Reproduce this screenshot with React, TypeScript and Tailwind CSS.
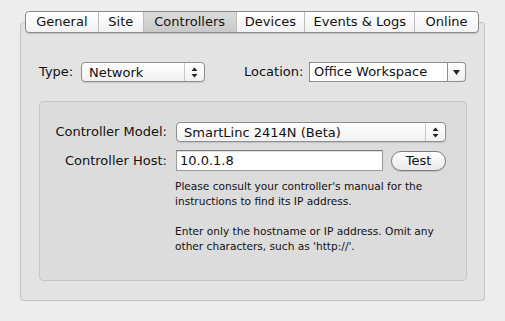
import React from 'react';

const font = { fontFamily: '"DejaVu Sans", "Liberation Sans", sans-serif' };

const tabs = [
  { label: 'General', w: 72 },
  { label: 'Site', w: 45 },
  { label: 'Controllers', w: 93 },
  { label: 'Devices', w: 69 },
  { label: 'Events & Logs', w: 110 },
  { label: 'Online', w: 64 },
];

const UpDown = () => (
  <svg width="7" height="11" viewBox="0 0 7 11">
    <path d="M3.5 0.5 L6.5 4 L0.5 4 Z" fill="#222" />
    <path d="M3.5 10.5 L6.5 7 L0.5 7 Z" fill="#222" />
  </svg>
);

const Popup = ({ value, width }: { value: string; width: string }) => (
  <div
    className={`flex h-[20px] ${width} items-center rounded-[4px] border border-[#8f8f8f] bg-gradient-to-b from-white to-[#f1f1f1] shadow-[0_1px_1px_rgba(0,0,0,0.12)]`}
  >
    <span className="flex-1 pl-[7px] text-[13px] text-[#111] leading-none">{value}</span>
    <span className="flex h-full w-[20px] items-center justify-center border-l border-[#c8c8c8]">
      <UpDown />
    </span>
  </div>
);

const App: React.FC = () => {
  return (
    <div className="h-[321px] w-[505px] overflow-hidden bg-[#ededed] px-[20px] pt-[11px]" style={font}>
      {/* Tab bar */}
      <div className="relative z-10 ml-[5px] flex h-[22px] w-[454px] overflow-hidden rounded-[4px] border border-[#8a8a8a] bg-gradient-to-b from-white to-[#f2f2f2] shadow-[0_1px_1px_rgba(0,0,0,0.15)]">
        {tabs.map((t, i) => (
          <div
            key={t.label}
            className={`flex items-center justify-center text-[13px] text-[#111] ${
              i > 0 ? 'border-l border-[#bcbcbc]' : ''
            } ${t.label === 'Controllers' ? 'bg-gradient-to-b from-[#dcdcdc] to-[#c9c9c9]' : ''}`}
            style={{ width: t.w }}
          >
            {t.label}
          </div>
        ))}
      </div>

      {/* Tab body */}
      <div className="-mt-[11px] h-[279px] w-[465px] rounded-[3px] border border-[#c4c4c4] bg-[#e3e3e3] px-[18px] pt-[39px]">
        <div className="flex h-[20px] items-center">
          <span className="w-[42px] text-[13px] text-[#111]">Type:</span>
          <Popup value="Network" width="w-[124px]" />
          <span className="ml-[39px] w-[65px] text-[13px] text-[#111]">Location:</span>
          <div className="flex h-[20px] w-[157px] items-stretch">
            <div className="flex flex-1 items-center border border-[#8f8f8f] bg-white pl-[4px] text-[13px] text-[#111]">
              Office Workspace
            </div>
            <div className="flex w-[18px] items-center justify-center rounded-r-[4px] border border-l-0 border-[#8f8f8f] bg-gradient-to-b from-white to-[#efefef]">
              <svg width="7" height="5" viewBox="0 0 7 5">
                <path d="M0 0 L7 0 L3.5 5 Z" fill="#222" />
              </svg>
            </div>
          </div>
        </div>

        {/* Group box */}
        <div className="mt-[19px] h-[180px] w-[428px] rounded-[4px] border border-[#c6c6c6] bg-[#dcdcdc] pt-[20px]">
          <div className="flex h-[20px] items-center">
            <span className="w-[136px] pr-[9px] text-right text-[13px] text-[#111]">Controller Model:</span>
            <Popup value="SmartLinc 2414N (Beta)" width="w-[270px]" />
          </div>
          <div className="mt-[8px] flex h-[21px] items-center">
            <span className="w-[136px] pr-[9px] text-right text-[13px] text-[#111]">Controller Host:</span>
            <div className="flex h-[21px] w-[207px] items-center border border-[#9a9a9a] border-t-[#7a7a7a] bg-white pl-[3px] text-[13px] text-[#111] shadow-[inset_0_1px_1px_rgba(0,0,0,0.15)]">
              10.0.1.8
            </div>
            <button className="ml-[8px] flex h-[20px] w-[55px] items-center justify-center rounded-full border border-[#7d7d7d] bg-gradient-to-b from-white to-[#eaeaea] text-[13px] text-[#111] shadow-[0_1px_1px_rgba(0,0,0,0.15)]">
              Test
            </button>
          </div>
          <div className="ml-[135px] mt-[8px] w-[285px] text-[10.6px] leading-[15px] text-[#111]">
            <p>
              Please consult your controller's manual for the
              <br />
              instructions to find its IP address.
            </p>
            <p className="mt-[15px]">
              Enter only the hostname or IP address. Omit any
              <br />
              other characters, such as 'http://'.
            </p>
          </div>
        </div>
      </div>
    </div>
  );
};

export default App;
